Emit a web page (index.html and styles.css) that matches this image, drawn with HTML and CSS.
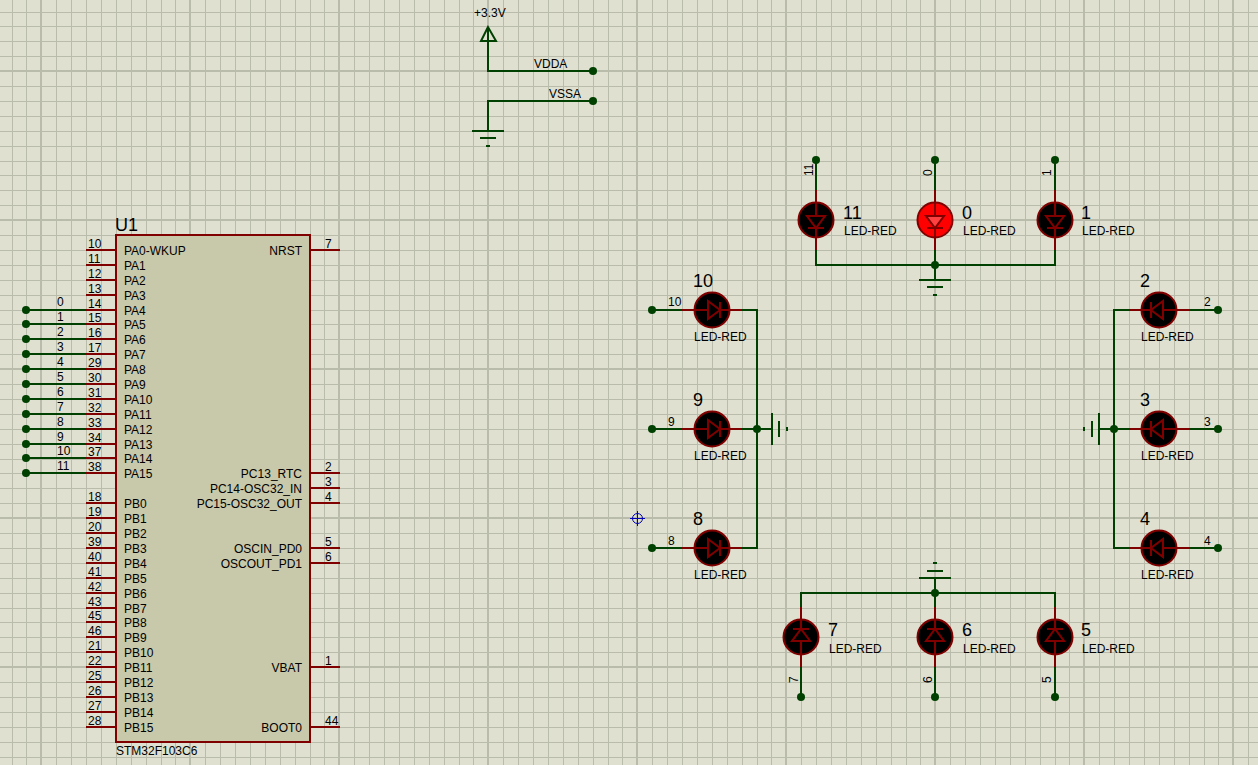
FILE: index.html
```
<!DOCTYPE html>
<html lang="en">
<head>
<meta charset="utf-8">
<title>STM32F103C6 LED clock schematic</title>
<link rel="stylesheet" href="styles.css">
</head>
<body>
<main class="sheet">
<svg class="schematic" role="img" aria-label="STM32F103C6 schematic with twelve LEDs">
  <defs>
    <pattern id="grid" x="41" y="71" width="149" height="149" patternUnits="userSpaceOnUse">
      <path class="grid-line" d="M15.5 0V149M30.5 0V149M45.5 0V149M60.5 0V149M75.5 0V149M90.5 0V149M105.5 0V149M120.5 0V149M134.5 0V149"/>
      <path class="grid-line" d="M0 15.5H149M0 30.5H149M0 45.5H149M0 60.5H149M0 75.5H149M0 90.5H149M0 104.5H149M0 119.5H149M0 134.5H149"/>
      <path class="grid-major" d="M0 0V149M149 0V149M0 0H149M0 149H149"/>
    </pattern>
    <g id="led">
      <path class="pin" d="M0 -30V-18M0 18V30"/>
      <circle class="bulb" r="17.5"/>
      <path class="diode" d="M0 -18V-4M0 8V18M-8 8H8M-9 -4H9L0 8Z"/>
    </g>
    <g id="ground">
      <path class="wire" d="M0 0V15M-16 15H16M-8 22H8M-2 30H2"/>
    </g>
    <circle id="dot" class="dot" r="4"/>
  </defs>

  <rect width="100%" height="100%" fill="url(#grid)"/>

  <!-- supply rails -->
  <path class="wire" d="M488 27V71H593M593 101H488V116"/>
  <path class="arrow" d="M488 27L481 41H496Z"/>
  <use href="#ground" x="488" y="116"/>
  <use href="#dot" x="593" y="71"/><use href="#dot" x="593" y="101"/>
  <text x="474" y="17">+3.3V</text>
  <text x="534" y="68">VDDA</text>
  <text x="549" y="98">VSSA</text>

  <!-- controller -->
  <path class="wire" d="M26 310H86M26 324H86M26 339H86M26 354H86M26 369H86M26 384H86M26 399H86M26 414H86M26 429H86M26 444H86M26 458H86M26 473H86"/>
  <path class="pin" d="M86 250H116M86 265H116M86 280H116M86 295H116M86 310H116M86 324H116M86 339H116M86 354H116M86 369H116M86 384H116M86 399H116M86 414H116M86 429H116M86 444H116M86 458H116M86 473H116M86 503H116M86 518H116M86 533H116M86 548H116M86 563H116M86 578H116M86 593H116M86 608H116M86 622H116M86 637H116M86 652H116M86 667H116M86 682H116M86 697H116M86 712H116M86 727H116"/>
  <path class="pin" d="M310 250H340M310 473H340M310 488H340M310 503H340M310 548H340M310 563H340M310 667H340M310 727H340"/>
  <rect class="chip" x="116" y="235" width="194" height="507"/>
  <text class="name" x="115" y="231">U1</text>
  <text x="116" y="755">STM32F103C6</text>

  <g>
    <use href="#dot" x="26" y="310"/><use href="#dot" x="26" y="324"/><use href="#dot" x="26" y="339"/><use href="#dot" x="26" y="354"/>
    <use href="#dot" x="26" y="369"/><use href="#dot" x="26" y="384"/><use href="#dot" x="26" y="399"/><use href="#dot" x="26" y="414"/>
    <use href="#dot" x="26" y="429"/><use href="#dot" x="26" y="444"/><use href="#dot" x="26" y="458"/><use href="#dot" x="26" y="473"/>
  </g>
  <g>
    <text x="57" y="306">0</text><text x="57" y="321">1</text><text x="57" y="336">2</text><text x="57" y="351">3</text>
    <text x="57" y="366">4</text><text x="57" y="381">5</text><text x="57" y="396">6</text><text x="57" y="411">7</text>
    <text x="57" y="426">8</text><text x="57" y="441">9</text><text x="57" y="455">10</text><text x="57" y="470">11</text>
  </g>
  <g>
    <text x="88" y="248">10</text><text x="88" y="263">11</text><text x="88" y="278">12</text><text x="88" y="293">13</text>
    <text x="88" y="308">14</text><text x="88" y="322">15</text><text x="88" y="337">16</text><text x="88" y="352">17</text>
    <text x="88" y="367">29</text><text x="88" y="382">30</text><text x="88" y="397">31</text><text x="88" y="412">32</text>
    <text x="88" y="427">33</text><text x="88" y="442">34</text><text x="88" y="456">37</text><text x="88" y="471">38</text>
    <text x="88" y="501">18</text><text x="88" y="516">19</text><text x="88" y="531">20</text><text x="88" y="546">39</text>
    <text x="88" y="561">40</text><text x="88" y="576">41</text><text x="88" y="591">42</text><text x="88" y="606">43</text>
    <text x="88" y="620">45</text><text x="88" y="635">46</text><text x="88" y="650">21</text><text x="88" y="665">22</text>
    <text x="88" y="680">25</text><text x="88" y="695">26</text><text x="88" y="710">27</text><text x="88" y="725">28</text>
  </g>
  <g>
    <text x="124" y="255">PA0-WKUP</text><text x="124" y="270">PA1</text><text x="124" y="285">PA2</text><text x="124" y="300">PA3</text>
    <text x="124" y="315">PA4</text><text x="124" y="329">PA5</text><text x="124" y="344">PA6</text><text x="124" y="359">PA7</text>
    <text x="124" y="374">PA8</text><text x="124" y="389">PA9</text><text x="124" y="404">PA10</text><text x="124" y="419">PA11</text>
    <text x="124" y="434">PA12</text><text x="124" y="449">PA13</text><text x="124" y="463">PA14</text><text x="124" y="478">PA15</text>
    <text x="124" y="508">PB0</text><text x="124" y="523">PB1</text><text x="124" y="538">PB2</text><text x="124" y="553">PB3</text>
    <text x="124" y="568">PB4</text><text x="124" y="583">PB5</text><text x="124" y="598">PB6</text><text x="124" y="613">PB7</text>
    <text x="124" y="627">PB8</text><text x="124" y="642">PB9</text><text x="124" y="657">PB10</text><text x="124" y="672">PB11</text>
    <text x="124" y="687">PB12</text><text x="124" y="702">PB13</text><text x="124" y="717">PB14</text><text x="124" y="732">PB15</text>
  </g>
  <g class="right">
    <text x="302" y="255">NRST</text><text x="302" y="478">PC13_RTC</text><text x="302" y="493">PC14-OSC32_IN</text><text x="302" y="508">PC15-OSC32_OUT</text>
    <text x="302" y="553">OSCIN_PD0</text><text x="302" y="568">OSCOUT_PD1</text><text x="302" y="672">VBAT</text><text x="302" y="732">BOOT0</text>
  </g>
  <g>
    <text x="325" y="248">7</text><text x="325" y="471">2</text><text x="325" y="486">3</text><text x="325" y="501">4</text>
    <text x="325" y="546">5</text><text x="325" y="561">6</text><text x="325" y="665">1</text><text x="325" y="725">44</text>
  </g>

  <!-- top row -->
  <path class="wire" d="M816 160V190M935 160V190M1055 160V190M816 250V265H1055V250M935 250V265"/>
  <use href="#led" x="816" y="220"/>
  <use href="#led" class="lit" x="935" y="220"/>
  <use href="#led" x="1055" y="220"/>
  <use href="#ground" x="935" y="265"/>
  <use href="#dot" x="816" y="160"/><use href="#dot" x="935" y="160"/><use href="#dot" x="1055" y="160"/><use href="#dot" x="935" y="265"/>
  <text transform="translate(813 176) rotate(-90)">11</text>
  <text transform="translate(932 176) rotate(-90)">0</text>
  <text transform="translate(1051 176) rotate(-90)">1</text>
  <text class="name" x="843" y="219">11</text><text x="844" y="235">LED-RED</text>
  <text class="name" x="962" y="219">0</text><text x="963" y="235">LED-RED</text>
  <text class="name" x="1081" y="219">1</text><text x="1082" y="235">LED-RED</text>

  <!-- right column -->
  <path class="wire" d="M1218 310H1189M1218 429H1189M1218 548H1189M1129 310H1114V548H1129M1129 429H1114"/>
  <use href="#led" transform="translate(1159 310) rotate(90)"/>
  <use href="#led" transform="translate(1159 429) rotate(90)"/>
  <use href="#led" transform="translate(1159 548) rotate(90)"/>
  <use href="#ground" transform="translate(1114 429) rotate(90)"/>
  <use href="#dot" x="1218" y="310"/><use href="#dot" x="1218" y="429"/><use href="#dot" x="1218" y="548"/><use href="#dot" x="1114" y="429"/>
  <text x="1204" y="306">2</text><text x="1204" y="426">3</text><text x="1204" y="545">4</text>
  <text class="name" x="1140" y="287">2</text><text x="1141" y="341">LED-RED</text>
  <text class="name" x="1140" y="406">3</text><text x="1141" y="460">LED-RED</text>
  <text class="name" x="1140" y="525">4</text><text x="1141" y="579">LED-RED</text>

  <!-- bottom row -->
  <path class="wire" d="M801 697V667M935 697V667M1055 697V667M801 608V593H1055V608M935 608V593"/>
  <use href="#led" transform="translate(801 637) rotate(180)"/>
  <use href="#led" transform="translate(935 637) rotate(180)"/>
  <use href="#led" transform="translate(1055 637) rotate(180)"/>
  <use href="#ground" transform="translate(935 593) rotate(180)"/>
  <use href="#dot" x="801" y="697"/><use href="#dot" x="935" y="697"/><use href="#dot" x="1055" y="697"/><use href="#dot" x="935" y="593"/>
  <text transform="translate(798 683) rotate(-90)">7</text>
  <text transform="translate(932 683) rotate(-90)">6</text>
  <text transform="translate(1051 683) rotate(-90)">5</text>
  <text class="name" x="828" y="636">7</text><text x="829" y="653">LED-RED</text>
  <text class="name" x="962" y="636">6</text><text x="963" y="653">LED-RED</text>
  <text class="name" x="1081" y="636">5</text><text x="1082" y="653">LED-RED</text>

  <!-- left column -->
  <path class="wire" d="M652 310H682M652 429H682M652 548H682M742 310H757V548H742M742 429H757"/>
  <use href="#led" transform="translate(712 310) rotate(-90)"/>
  <use href="#led" transform="translate(712 429) rotate(-90)"/>
  <use href="#led" transform="translate(712 548) rotate(-90)"/>
  <use href="#ground" transform="translate(757 429) rotate(-90)"/>
  <use href="#dot" x="652" y="310"/><use href="#dot" x="652" y="429"/><use href="#dot" x="652" y="548"/><use href="#dot" x="757" y="429"/>
  <text x="668" y="306">10</text><text x="668" y="426">9</text><text x="668" y="545">8</text>
  <text class="name" x="693" y="287">10</text><text x="694" y="341">LED-RED</text>
  <text class="name" x="693" y="406">9</text><text x="694" y="460">LED-RED</text>
  <text class="name" x="693" y="525">8</text><text x="694" y="579">LED-RED</text>

  <!-- sheet origin -->
  <g class="origin">
    <circle cx="637.5" cy="518.5" r="5"/>
    <path d="M630 518.5H645M637.5 511V526"/>
  </g>
</svg>
</main>
</body>
</html>
```
FILE: styles.css
```
body {
  margin: 0;
  background: #dfe0d0;
}

.sheet {
  display: flex;
  min-height: 100vh;
}

.schematic {
  flex: 1;
  min-height: 100%;
  font-family: "Liberation Sans", Arial, sans-serif;
  font-size: 12px;
  fill: #000;
}

.grid-line,
.grid-major {
  fill: none;
  stroke: #b9bbab;
  stroke-width: 1px;
}

.grid-major {
  stroke-width: 2px;
}

.wire,
.arrow,
.pin {
  fill: none;
  stroke: #004000;
  stroke-width: 2px;
}

.pin {
  stroke: #800000;
}

.dot {
  fill: #004000;
}

.chip {
  fill: #c8c8aa;
  stroke: #800000;
  stroke-width: 2px;
}

.bulb {
  fill: var(--bulb, #000);
  stroke: #800000;
  stroke-width: 2px;
}

.diode {
  fill: var(--glow, #000);
  stroke: #800000;
  stroke-width: 2px;
}

.lit {
  --bulb: #f00;
  --glow: #ff4040;
}

.name {
  font-size: 18px;
}

.right {
  text-anchor: end;
}

.origin {
  fill: none;
  stroke: #0000b4;
  stroke-width: 1px;
}
```
